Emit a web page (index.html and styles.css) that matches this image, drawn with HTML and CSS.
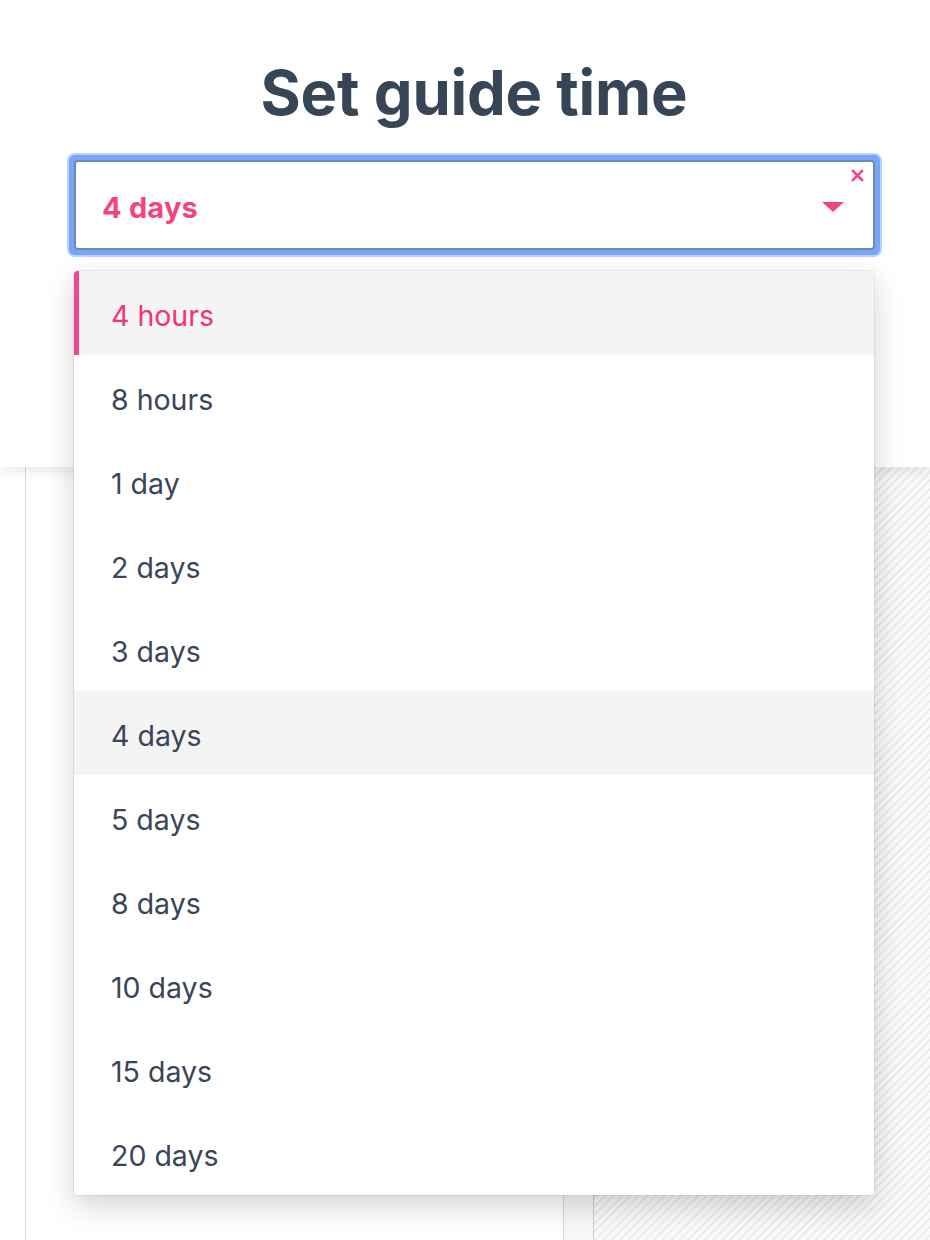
FILE: index.html
```html
<!DOCTYPE html>
<html>
<head>
<meta charset="utf-8">
<link rel="stylesheet" href="styles.css">
</head>
<body>
<div class="page">
  <header class="panel">
    <h1 class="title">Set guide time</h1>
    <div class="select-wrap">
      <div class="select">
        <span class="value">4 days</span>
        <svg class="clear" width="13" height="13" viewBox="0 0 13 13"><path d="M2 2L11 11M11 2L2 11" stroke="#f2457f" stroke-width="2.6" stroke-linecap="square"/></svg>
        <span class="caret"></span>
      </div>
    </div>
  </header>
  <div class="below">
    <div class="gutter"></div>
    <div class="col-main"></div>
    <div class="col-narrow"></div>
    <div class="striped"></div>
  </div>
  <ul class="menu">
    <li class="item active">4 hours</li>
    <li class="item">8 hours</li>
    <li class="item">1 day</li>
    <li class="item">2 days</li>
    <li class="item">3 days</li>
    <li class="item hover">4 days</li>
    <li class="item">5 days</li>
    <li class="item">8 days</li>
    <li class="item">10 days</li>
    <li class="item">15 days</li>
    <li class="item">20 days</li>
  </ul>
</div>
</body>
</html>
```

FILE: styles.css
```css
html, body {
  margin: 0;
  padding: 0;
  background: #fff;
  font-family: Inter, "Noto Sans", sans-serif;
}
.page {
  position: relative;
  width: 930px;
  height: 1240px;
  overflow: hidden;
  display: flex;
  flex-direction: column;
}
.panel {
  position: relative;
  z-index: 2;
  height: 467px;
  flex: none;
  background: #fff;
  box-shadow: 0 3px 14px rgba(0, 0, 0, 0.10);
  padding-top: 58px;
  box-sizing: border-box;
}
.title {
  margin: 0;
  padding-left: 18px;
  text-align: center;
  font-size: 61.5px;
  font-weight: 700;
  color: #364656;
  line-height: 70px;
  letter-spacing: -0.2px;
}
.select-wrap {
  margin: 27px 50px 0 69px;
  padding: 5px;
  border-radius: 6px;
  background: #76a5f9;
  box-shadow: 0 0 0 2px #b9d1fb;
}
.select {
  position: relative;
  height: 90px;
  box-sizing: border-box;
  border: 2px solid #6f8ca6;
  border-radius: 4px;
  background: #fff;
  display: flex;
  align-items: center;
  padding: 4px 0 0 26px;
}
.value {
  font-size: 29px;
  font-weight: 700;
  color: #f2457f;
  letter-spacing: 0.2px;
}
.clear {
  position: absolute;
  right: 9px;
  top: 7px;
}
.caret {
  position: absolute;
  right: 29px;
  top: 40px;
  width: 0;
  height: 0;
  border-left: 11px solid transparent;
  border-right: 11px solid transparent;
  border-top: 10px solid #f2457f;
}
.below {
  flex: 1;
  display: flex;
  background: #fff;
}
.gutter {
  width: 25px;
  flex: none;
  border-right: 1px solid #d6d6d6;
}
.col-main {
  width: 537px;
  flex: none;
  border-right: 1px solid #d3d3d3;
  background: #fff;
}
.col-narrow {
  width: 29px;
  flex: none;
  border-right: 1px solid #cfcfcf;
  background: #f7f7f7;
}
.striped {
  flex: 1;
  background: repeating-linear-gradient(135deg, #ececec 0 2px, #fafafa 2px 6px);
}
.menu {
  position: absolute;
  z-index: 3;
  left: 74px;
  top: 271px;
  width: 800px;
  margin: 0;
  padding: 0;
  list-style: none;
  background: #fff;
  border-radius: 4px;
  overflow: hidden;
  box-shadow: 0 0 0 1px rgba(0, 0, 0, 0.06), 0 10px 30px rgba(0, 0, 0, 0.18);
}
.item {
  height: 84px;
  box-sizing: border-box;
  display: flex;
  align-items: center;
  padding: 4px 0 0 37px;
  font-size: 28.5px;
  color: #3a4658;
}
.item.active {
  background: #f4f4f4;
  color: #f2337a;
  box-shadow: inset 5px 0 0 #f4468a;
}
.item.hover {
  background: #f4f4f4;
}
```
